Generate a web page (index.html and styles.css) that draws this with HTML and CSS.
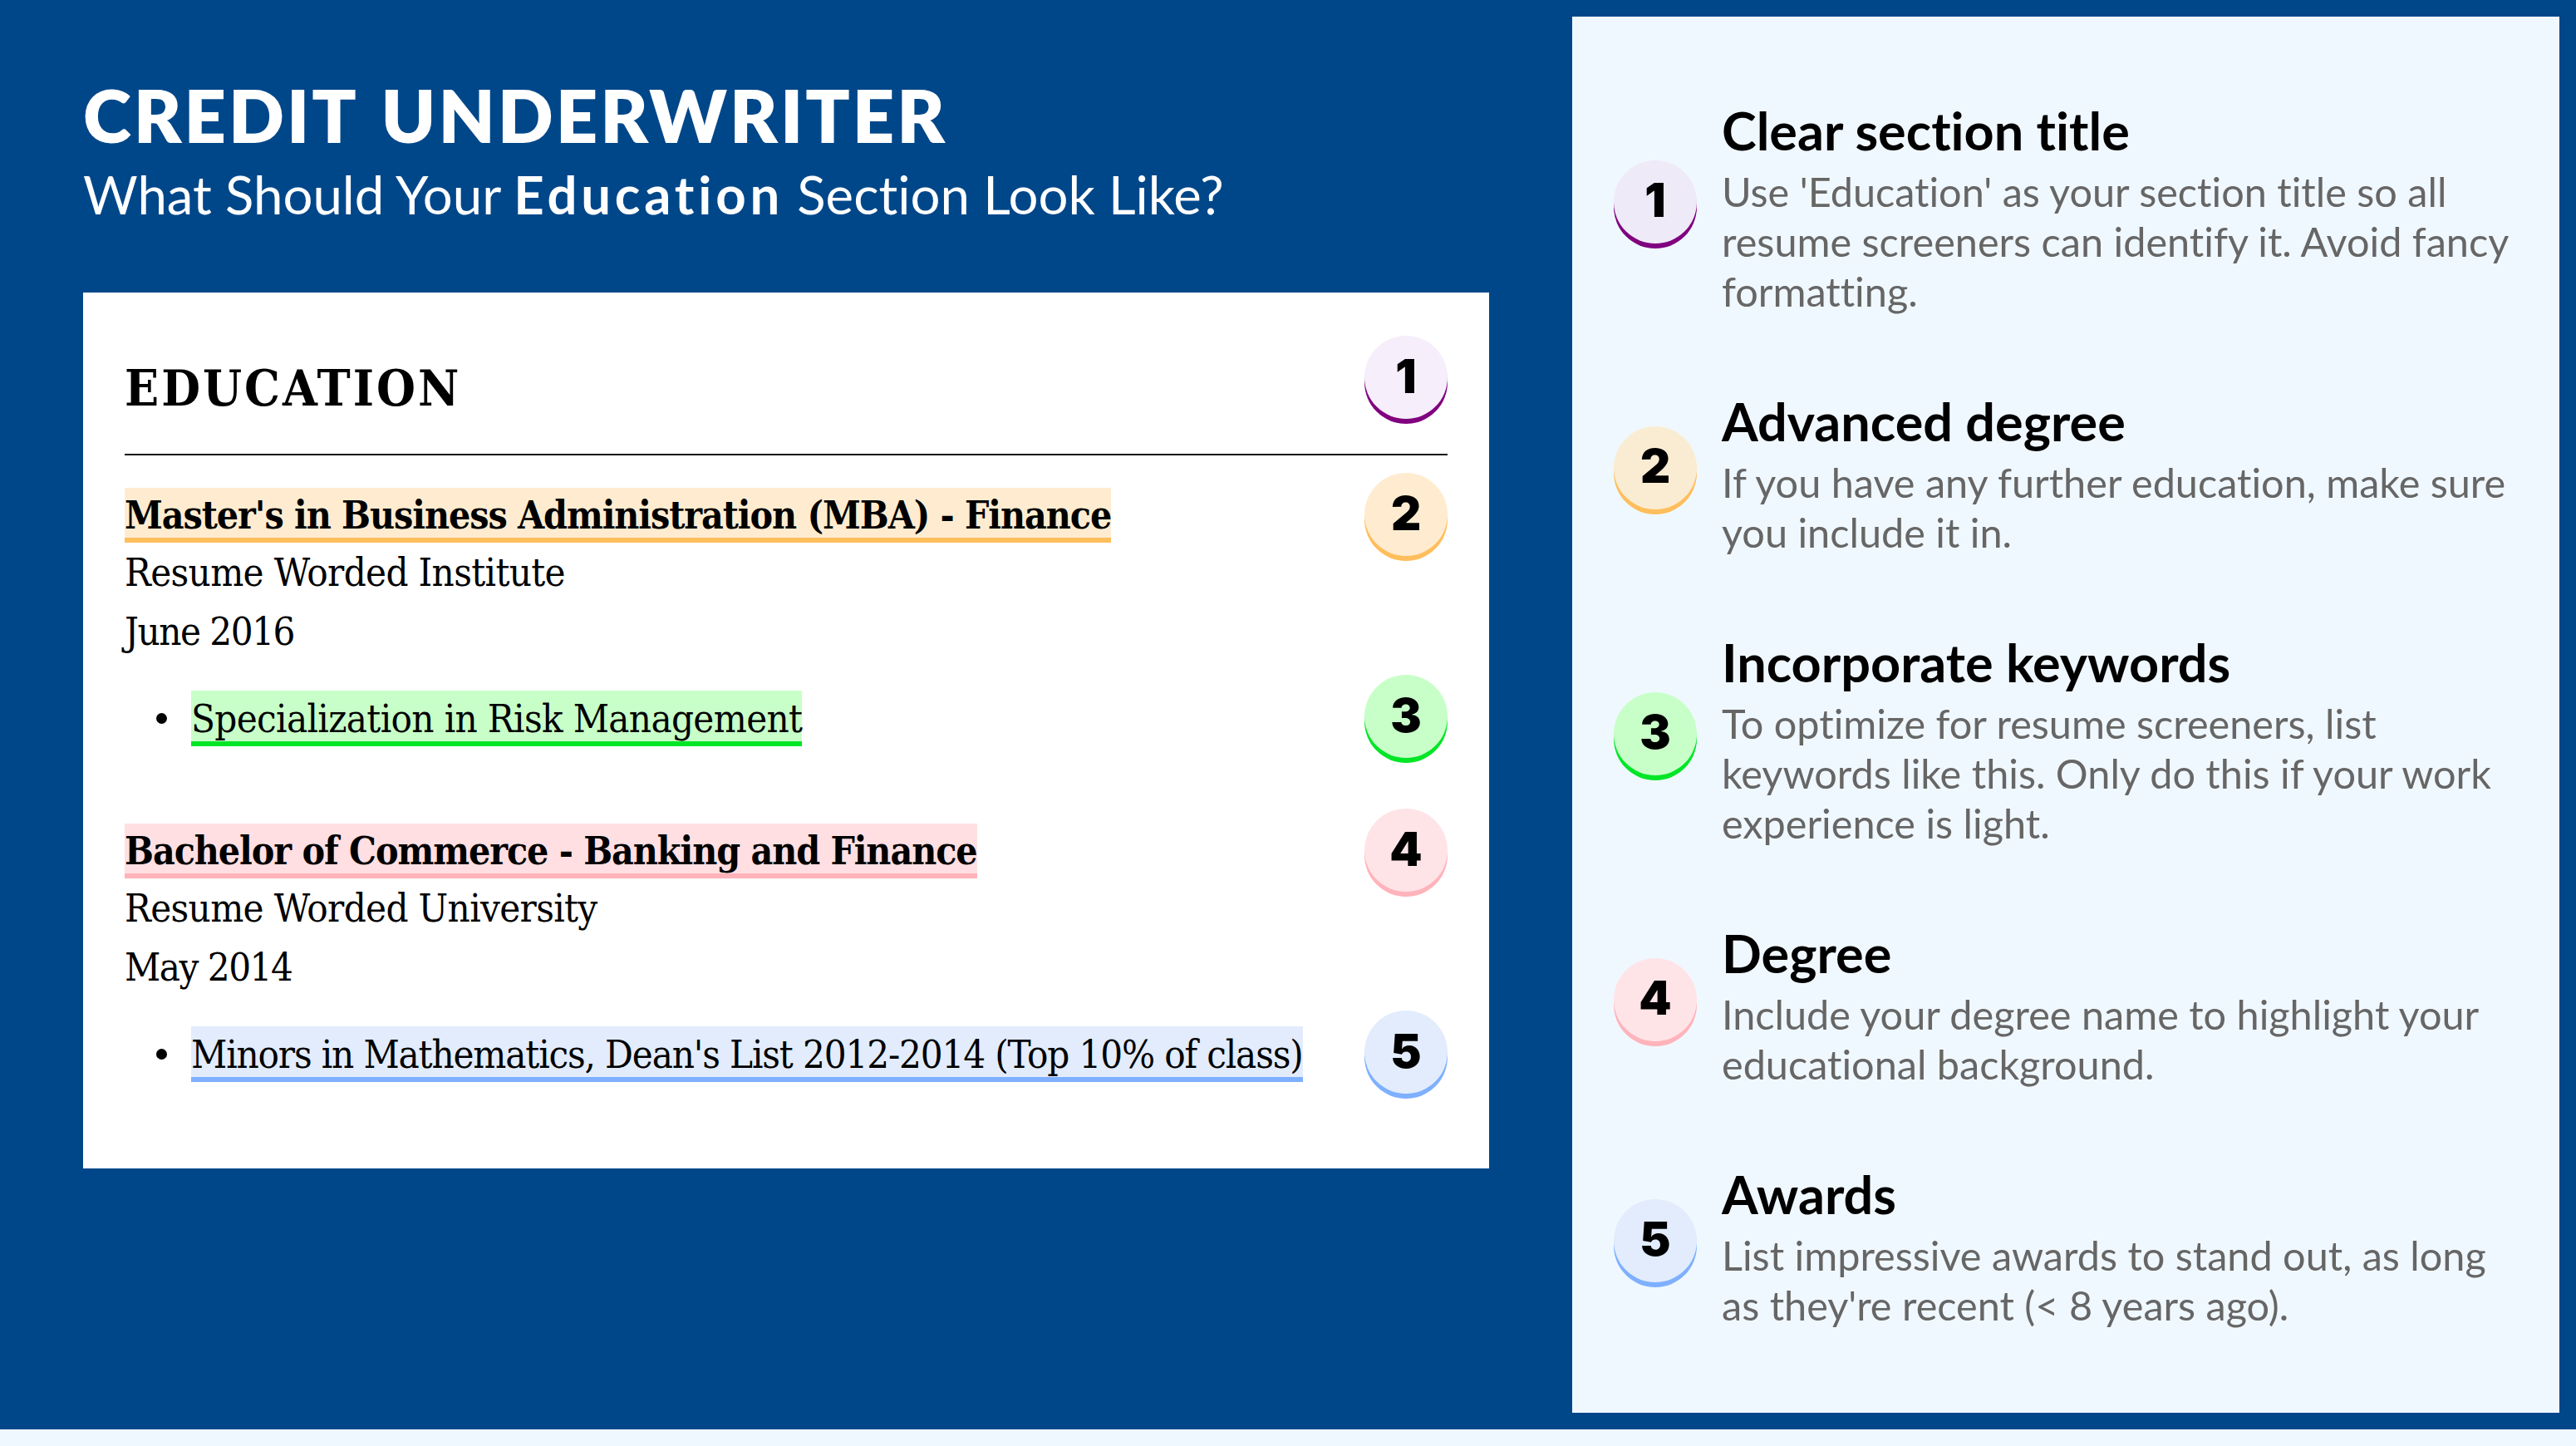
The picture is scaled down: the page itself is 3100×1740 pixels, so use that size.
FILE: index.html
```html
<!DOCTYPE html>
<html lang="en">
<head>
<meta charset="utf-8">
<title>Credit Underwriter - Education Section</title>
<link rel="stylesheet" href="styles.css">
</head>
<body>
<main class="page">
  <section class="left">
    <h1 class="title">CREDIT UNDERWRITER</h1>
    <p class="subtitle">What Should Your <b class="subtitle-strong">Education</b> Section Look Like?</p>
    <div class="resume">
      <div class="resume-head">
        <h2 class="resume-title">EDUCATION</h2>
        <span class="badge badge-1 badge-over badge-over-1">1</span>
      </div>
      <div class="entry">
        <div class="line bold"><span class="mark mark-2">Master's in Business Administration (MBA) - Finance</span></div>
        <span class="badge badge-2 badge-over badge-over-2">2</span>
        <div class="line">Resume Worded Institute</div>
        <div class="line date">June 2016</div>
        <ul class="bullets">
          <li class="bullet"><span class="mark mark-3">Specialization in Risk Management</span>
            <span class="badge badge-3 badge-over badge-over-3">3</span></li>
        </ul>
      </div>
      <div class="entry">
        <div class="line bold"><span class="mark mark-4">Bachelor of Commerce - Banking and Finance</span></div>
        <span class="badge badge-4 badge-over badge-over-2">4</span>
        <div class="line">Resume Worded University</div>
        <div class="line date">May 2014</div>
        <ul class="bullets">
          <li class="bullet"><span class="mark mark-5">Minors in Mathematics, Dean's List 2012-2014 (Top 10% of class)</span>
            <span class="badge badge-5 badge-over badge-over-3">5</span></li>
        </ul>
      </div>
    </div>
  </section>
  <aside class="panel">
    <div class="tip">
      <span class="badge badge-1 badge-alt">1</span>
      <div class="tip-body">
        <h3 class="tip-title">Clear section title</h3>
        <p class="tip-text">Use 'Education' as your section title so all<br>resume screeners can identify it. Avoid fancy<br>formatting.</p>
      </div>
    </div>
    <div class="tip">
      <span class="badge badge-2 badge-alt-2">2</span>
      <div class="tip-body">
        <h3 class="tip-title">Advanced degree</h3>
        <p class="tip-text">If you have any further education, make sure<br>you include it in.</p>
      </div>
    </div>
    <div class="tip">
      <span class="badge badge-3">3</span>
      <div class="tip-body">
        <h3 class="tip-title">Incorporate keywords</h3>
        <p class="tip-text">To optimize for resume screeners, list<br>keywords like this. Only do this if your work<br>experience is light.</p>
      </div>
    </div>
    <div class="tip">
      <span class="badge badge-4">4</span>
      <div class="tip-body">
        <h3 class="tip-title">Degree</h3>
        <p class="tip-text">Include your degree name to highlight your<br>educational background.</p>
      </div>
    </div>
    <div class="tip">
      <span class="badge badge-5">5</span>
      <div class="tip-body">
        <h3 class="tip-title">Awards</h3>
        <p class="tip-text">List impressive awards to stand out, as long<br>as they're recent (&lt; 8 years ago).</p>
      </div>
    </div>
  </aside>
</main>
<div class="strip"></div>
</body>
</html>
```
FILE: styles.css
```css
* { box-sizing: border-box; }
html, body { margin: 0; padding: 0; }
body {
  width: 3100px;
  height: 1740px;
  background: #f0f8ff;
  font-family: "Lato", "Liberation Sans", sans-serif;
  font-variant-ligatures: none;
  overflow: hidden;
}
.page {
  display: flex;
  height: 1720px;
  background: #00478a;
  padding: 20px 20px 20px 100px;
}
.left {
  width: 1692px;
  margin-right: 100px;
  flex: none;
}
.title {
  margin: 68px 0 0;
  font-size: 88px;
  line-height: 100px;
  font-weight: 800;
  letter-spacing: 3px;
  word-spacing: 6px;
  color: #fff;
}
.subtitle {
  margin: 6px 0 0;
  font-size: 63.5px;
  line-height: 80px;
  font-weight: 400;
  color: #fff;
}
.subtitle-strong { font-weight: 700; letter-spacing: 4.8px; }
.resume {
  margin-top: 78px;
  height: 1054px;
  background: #fff;
  padding: 40px 50px 0;
  font-family: "DejaVu Serif Condensed", "DejaVu Serif", serif;
  color: #000;
}
.resume-head {
  position: relative;
  height: 156px;
  padding-bottom: 4px;
  border-bottom: 2px solid #111;
  display: flex;
  align-items: center;
}
.resume-title {
  margin: 0;
  font-size: 60px;
  font-weight: 700;
  letter-spacing: 3px;
}
.entry { position: relative; margin-top: 40px; }
.entry + .entry { margin-top: 92px; }
.line {
  font-size: 47px;
  line-height: 71px;
  letter-spacing: -0.66px;
  white-space: nowrap;
}
.bold { font-size: 46px; line-height: 65px; letter-spacing: -1.06px; font-weight: 700; }
.date { letter-spacing: -1.5px; }
.mark { padding: 6px 0 0; }
.mark-2 { background: #ffecd0; border-bottom: 6px solid #ffbe5c; }
.mark-3 { background: #c8ffc8; border-bottom: 6px solid #00e626; }
.mark-4 { background: #ffdfe2; border-bottom: 6px solid #ffb3ba; }
.mark-5 { background: #e2ecfc; border-bottom: 6px solid #7eb0ff; letter-spacing: -1.16px; }
.bullets { margin: 34px 0 0; padding: 0 0 0 80px; list-style: none; }
.bullet {
  position: relative;
  font-size: 47px;
  line-height: 71px;
  letter-spacing: -0.66px;
  white-space: nowrap;
}
.bullet::before {
  content: "";
  position: absolute;
  left: -42px;
  top: 29px;
  width: 13px;
  height: 13px;
  border-radius: 50%;
  background: #000;
}
.badge {
  flex: none;
  display: flex;
  align-items: center;
  justify-content: center;
  width: 100px;
  height: 100px;
  padding-bottom: 3px;
  border-radius: 50%;
  font-family: "Inter", "Liberation Sans", sans-serif;
  font-size: 56px;
  font-weight: 900;
  line-height: 1;
  letter-spacing: 0;
  color: #000;
}
.badge-over { position: absolute; right: 0; }
.badge-over-1 { top: 12px; }
.badge-over-2 { top: -19px; }
.badge-over-3 { top: -17px; }
.badge-1 { background: #f6eefa; box-shadow: 0 6px 0 #800080; }
.badge-alt { background: #eeeaf8; }
.badge-2 { background: #ffecd0; box-shadow: 0 6px 0 #ffbe5c; }
.badge-alt-2 { background: #faecd2; }
.badge-3 { background: #c8ffc8; box-shadow: 0 6px 0 #00e626; }
.badge-4 { background: #ffe4e7; box-shadow: 0 6px 0 #ffb3ba; }
.badge-5 { background: #e2ecfc; box-shadow: 0 6px 0 #7eb0ff; }
.panel {
  width: 1188px;
  height: 1680px;
  flex: none;
  background: #f0f8ff;
  padding: 96px 0 0 50px;
  display: flex;
  flex-direction: column;
  gap: 86px;
}
.tip {
  display: flex;
  align-items: center;
  gap: 30px;
}
.tip > .badge { margin-bottom: 11px; }
.tip-title {
  margin: 0;
  padding-bottom: 2px;
  font-size: 63px;
  line-height: 82px;
  font-weight: 700;
  color: #000;
}
.tip-text {
  margin: 0;
  font-size: 48.6px;
  line-height: 60px;
  color: #666;
  white-space: nowrap;
}
.strip { height: 20px; background: #f0f8ff; }
```
